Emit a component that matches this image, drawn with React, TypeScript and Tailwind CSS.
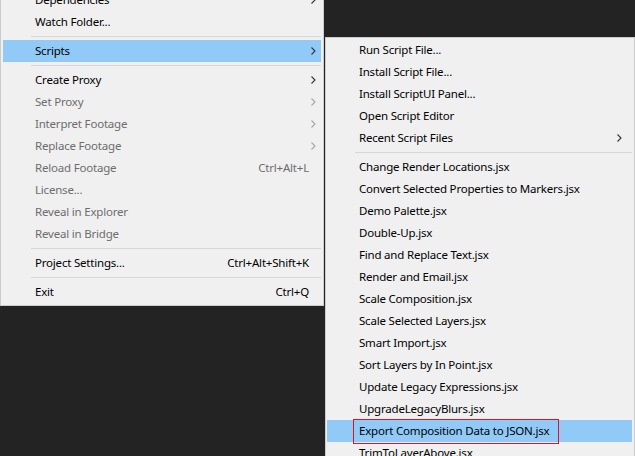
import React from 'react';

type Item =
  | { kind: 'sep' }
  | { kind: 'item'; label: string; shortcut?: string; sub?: boolean; disabled?: boolean; active?: boolean; marked?: boolean };

const mainItems: Item[] = [
  { kind: 'item', label: 'Dependencies', sub: true },
  { kind: 'item', label: 'Watch Folder...' },
  { kind: 'sep' },
  { kind: 'item', label: 'Scripts', sub: true, active: true },
  { kind: 'sep' },
  { kind: 'item', label: 'Create Proxy', sub: true },
  { kind: 'item', label: 'Set Proxy', sub: true, disabled: true },
  { kind: 'item', label: 'Interpret Footage', sub: true, disabled: true },
  { kind: 'item', label: 'Replace Footage', sub: true, disabled: true },
  { kind: 'item', label: 'Reload Footage', shortcut: 'Ctrl+Alt+L', disabled: true },
  { kind: 'item', label: 'License...', disabled: true },
  { kind: 'item', label: 'Reveal in Explorer', disabled: true },
  { kind: 'item', label: 'Reveal in Bridge', disabled: true },
  { kind: 'sep' },
  { kind: 'item', label: 'Project Settings...', shortcut: 'Ctrl+Alt+Shift+K' },
  { kind: 'sep' },
  { kind: 'item', label: 'Exit', shortcut: 'Ctrl+Q' },
];

const scriptItems: Item[] = [
  { kind: 'item', label: 'Run Script File...' },
  { kind: 'item', label: 'Install Script File...' },
  { kind: 'item', label: 'Install ScriptUI Panel...' },
  { kind: 'item', label: 'Open Script Editor' },
  { kind: 'item', label: 'Recent Script Files', sub: true },
  { kind: 'sep' },
  { kind: 'item', label: 'Change Render Locations.jsx' },
  { kind: 'item', label: 'Convert Selected Properties to Markers.jsx' },
  { kind: 'item', label: 'Demo Palette.jsx' },
  { kind: 'item', label: 'Double-Up.jsx' },
  { kind: 'item', label: 'Find and Replace Text.jsx' },
  { kind: 'item', label: 'Render and Email.jsx' },
  { kind: 'item', label: 'Scale Composition.jsx' },
  { kind: 'item', label: 'Scale Selected Layers.jsx' },
  { kind: 'item', label: 'Smart Import.jsx' },
  { kind: 'item', label: 'Sort Layers by In Point.jsx' },
  { kind: 'item', label: 'Update Legacy Expressions.jsx' },
  { kind: 'item', label: 'UpgradeLegacyBlurs.jsx' },
  { kind: 'item', label: 'Export Composition Data to JSON.jsx', active: true, marked: true },
  { kind: 'item', label: 'TrimToLayerAbove.jsx' },
];

function Chevron({ disabled }: { disabled?: boolean }) {
  return (
    <svg width="5" height="8" viewBox="0 0 5 8" className="shrink-0">
      <polyline
        points="0.5,0.5 4,4 0.5,7.5"
        fill="none"
        stroke={disabled ? '#a6a6a6' : '#333333'}
        strokeWidth="1.1"
      />
    </svg>
  );
}

function Menu({ items, arrowPad }: { items: Item[]; arrowPad: string }) {
  return (
    <>
      {items.map((it, i) =>
        it.kind === 'sep' ? (
          <div key={i} className="h-[7px] flex items-center pl-[28px]">
            <div className="h-px w-full bg-[#d7d7d7]" />
          </div>
        ) : (
          <div
            key={i}
            className={`relative h-[22px] flex items-center pl-[32px] ${arrowPad} ${
              it.active ? 'bg-[#91c9f7]' : ''
            } ${it.disabled ? 'text-[#6d6d6d]' : 'text-black'}`}
          >
            <span className="flex-1 whitespace-nowrap">{it.label}</span>
            {it.shortcut && <span className="whitespace-nowrap mr-[7px]">{it.shortcut}</span>}
            {it.sub && <Chevron disabled={it.disabled} />}
            {it.marked && (
              <div className="absolute left-[26px] top-[-1px] w-[206px] h-[25px] border border-[#e0141e]" />
            )}
          </div>
        )
      )}
    </>
  );
}

export default function App() {
  return (
    <div
      className="relative w-[635px] h-[456px] overflow-hidden bg-[#232323] text-[11.5px] tracking-[-0.2px] leading-none"
      style={{ fontFamily: '"Noto Sans", "Open Sans", sans-serif' }}
    >
      {/* main File menu */}
      <div className="absolute left-0 top-[-14px] w-[324px] bg-[#f0f0f0] border border-[#cccccc] py-[2px] px-[2px]">
        <Menu items={mainItems} arrowPad="pr-[5px]" />
      </div>

      {/* Scripts submenu */}
      <div className="absolute left-[325px] top-[37px] w-[310px] h-[440px] bg-[#f0f0f0] border border-[#cccccc] py-px pl-px pr-[2px]">
        <Menu items={scriptItems} arrowPad="pr-[10px]" />
      </div>
    </div>
  );
}
